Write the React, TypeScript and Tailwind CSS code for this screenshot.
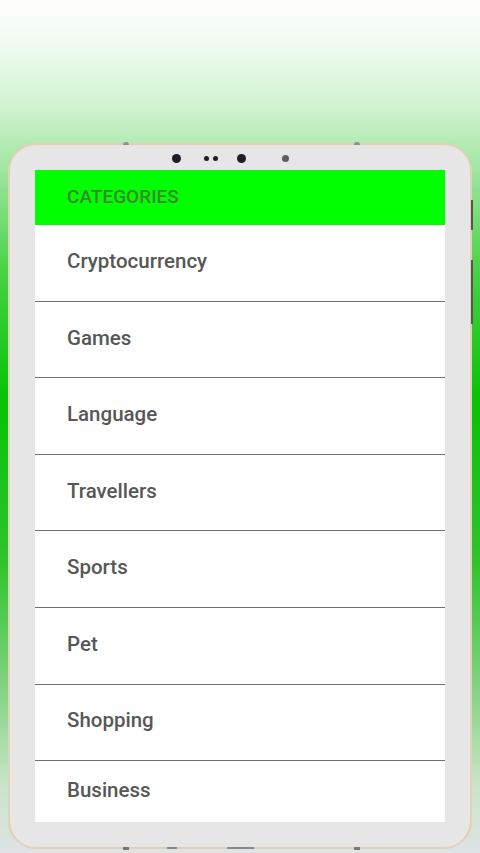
const categories = [
  "Cryptocurrency",
  "Games",
  "Language",
  "Travellers",
  "Sports",
  "Pet",
  "Shopping",
  "Business",
];

const App = () => {
  return (
    <div className="w-[480px] h-[853px] overflow-hidden bg-[linear-gradient(180deg,#ffffff_0%,#eefaee_6%,#cdf2cd_13%,#9fe59f_20%,#45d245_32%,#08c208_47%,#2ec42e_66%,#7ed27e_80%,#c9e4c9_92%,#dfe3e5_100%)] font-['Roboto',sans-serif] pt-[143px] px-[8px]">
      <div className="relative w-[464px] h-[706px] rounded-[28px] border-[2px] border-[#e3d0b2] bg-[#e6e6e6] p-[25px]">
        {/* hardware buttons */}
        <div className="absolute top-[-3px] left-[113px] w-[6px] h-[3px] bg-[#8f8f8f] rounded-t-sm" />
        <div className="absolute top-[-3px] left-[344px] w-[6px] h-[3px] bg-[#8f8f8f] rounded-t-sm" />
        <div className="absolute right-[-3px] top-[55px] w-[2px] h-[30px] bg-[#555]" />
        <div className="absolute right-[-3px] top-[115px] w-[2px] h-[64px] bg-[#555]" />
        <div className="absolute bottom-[-3px] left-[113px] w-[6px] h-[3px] bg-[#777]" />
        <div className="absolute bottom-[-2px] left-[157px] w-[10px] h-[2px] bg-[#888]" />
        <div className="absolute bottom-[-2px] left-[217px] w-[27px] h-[2px] bg-[#888]" />
        <div className="absolute bottom-[-3px] left-[344px] w-[6px] h-[3px] bg-[#777]" />

        {/* camera row */}
        <div className="absolute top-[8px] left-[162px] h-[10px] flex items-center">
          <span className="w-[9px] h-[9px] rounded-full bg-[#1d1d2b]" />
          <span className="ml-[23px] w-[5px] h-[5px] rounded-full bg-[#1d1d2b]" />
          <span className="ml-[4px] w-[5px] h-[5px] rounded-full bg-[#1d1d2b]" />
          <span className="ml-[19px] w-[9px] h-[9px] rounded-full bg-[#1d1d2b]" />
          <span className="ml-[36px] w-[7px] h-[7px] rounded-full bg-[#5e5e5e]" />
        </div>

        <div className="w-full h-full bg-white flex flex-col overflow-hidden">
          <div className="h-[55px] shrink-0 bg-[#00ff00] flex items-center pl-[32px] text-[19px] font-medium text-[#3a8a2c]">
            CATEGORIES
          </div>
          {categories.map((c) => (
            <div
              key={c}
              className="h-[76.6px] shrink-0 box-border border-b-[1.5px] border-[#6f6f6f] flex items-center pl-[32px] pb-[3px] text-[20.5px] font-medium text-[#575757] last:border-b-0 last:h-auto last:flex-1"
            >
              {c}
            </div>
          ))}
        </div>
      </div>
    </div>
  );
};

export default App;
